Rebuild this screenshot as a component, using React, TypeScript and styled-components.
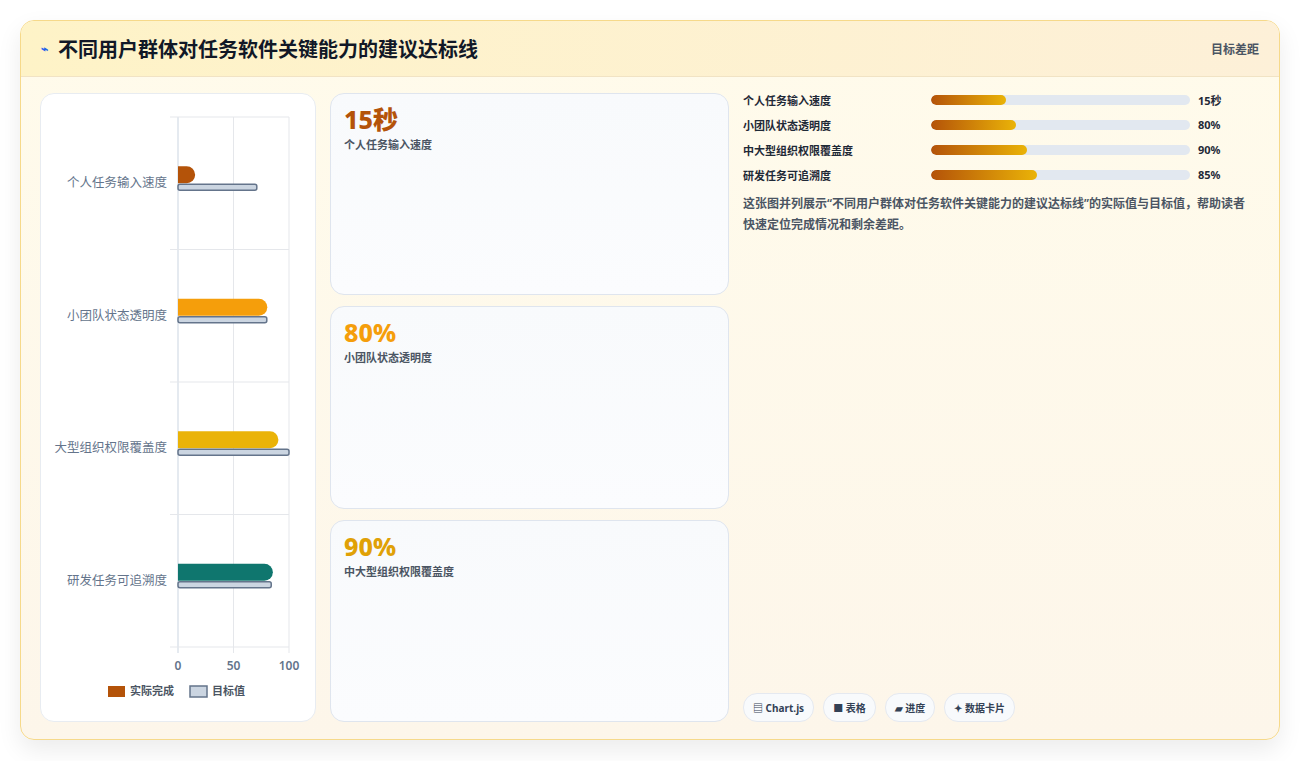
import React from "react";
import styled, { createGlobalStyle } from "styled-components";

const Global = createGlobalStyle`
  body {
    margin: 0;
    background: #f3f4f6;
    font-family: "Noto Sans", "Noto Sans CJK SC", sans-serif;
  }
`;

const Page = styled.div`
  width: 1300px;
  height: 761px;
  padding: 20px;
  box-sizing: border-box;
  background: #ffffff;
`;

const Card = styled.div`
  height: 720px;
  width: 1260px;
  box-sizing: border-box;
  border: 1px solid #f6d98a;
  border-radius: 14px;
  background: linear-gradient(180deg, #fffbeb 0%, #fdf6ea 100%);
  box-shadow: 0 10px 24px rgba(0, 0, 0, 0.08);
  display: flex;
  flex-direction: column;
  overflow: hidden;
`;

const Header = styled.div`
  height: 55px;
  flex-shrink: 0;
  display: flex;
  align-items: center;
  justify-content: space-between;
  padding: 0 20px;
  background: linear-gradient(90deg, #fef3c7 0%, #fdf0d8 100%);
  border-bottom: 1px solid #f1e3c4;
`;

const Title = styled.h1`
  margin: 0;
  font-size: 20px;
  font-weight: 700;
  color: #111827;
  display: flex;
  align-items: center;
  gap: 10px;
`;

const Gap = styled.span`
  font-size: 12px;
  font-weight: 600;
  color: #4b5563;
`;

const Body = styled.div`
  flex: 1;
  display: grid;
  grid-template-columns: 276px 399px 1fr;
  gap: 14px;
  padding: 16px 19px 18px 19px;
`;

const Panel = styled.div`
  background: #ffffff;
  border: 1px solid #e8ecf1;
  border-radius: 14px;
  display: flex;
  flex-direction: column;
  align-items: center;
`;

const Cards = styled.div`
  display: flex;
  flex-direction: column;
  gap: 11px;
`;

const Kpi = styled.div`
  flex: 1;
  border: 1px solid #dfe5ee;
  border-radius: 14px;
  background: linear-gradient(180deg, #f8fafc 0%, #fbfcfe 100%);
  padding: 10px 13px;
`;

const KpiValue = styled.div<{ $c: string }>`
  font-size: 25px;
  font-weight: 800;
  color: ${(p) => p.$c};
  line-height: 1.2;
`;

const KpiLabel = styled.div`
  font-size: 11px;
  font-weight: 600;
  color: #4b5563;
  margin-top: 2px;
`;

const Side = styled.div`
  display: flex;
  flex-direction: column;
  margin-top: -6px;
`;

const Row = styled.div`
  display: grid;
  grid-template-columns: 188px 267px 1fr;
  align-items: center;
  height: 25px;
  font-size: 11px;
  font-weight: 700;
  color: #1f2937;
`;

const Track = styled.div`
  height: 10px;
  border-radius: 5px;
  background: #e2e8f0;
  margin-right: 8px;
  overflow: hidden;
`;

const Fill = styled.div`
  height: 100%;
  border-radius: 5px;
  background: linear-gradient(90deg, #b45309, #eab308);
`;

const Note = styled.p`
  margin: 6px 0 0;
  font-size: 12px;
  font-weight: 600;
  line-height: 1.75;
  color: #4b5563;
  padding-right: 14px;
`;

const Chips = styled.div`
  margin-top: auto;
  display: flex;
  gap: 9px;
`;

const Chip = styled.span`
  padding: 6px 9px;
  border: 1px solid #e5e9f0;
  border-radius: 14px;
  background: #f8fafc;
  font-size: 10px;
  font-weight: 700;
  color: #334155;
`;

const rows = [
  { label: "个人任务输入速度", short: "个人任务输入速度", v: "15秒", fill: 29, actual: 15, target: 71, color: "#b45309", kc: "#b45309" },
  { label: "小团队状态透明度", short: "小团队状态透明度", v: "80%", fill: 33, actual: 80, target: 80, color: "#f59e0b", kc: "#f59e0b" },
  { label: "中大型组织权限覆盖度", short: "大型组织权限覆盖度", v: "90%", fill: 37, actual: 90, target: 100, color: "#eab308", kc: "#e0a106" },
  { label: "研发任务可追溯度", short: "研发任务可追溯度", v: "85%", fill: 41, actual: 85, target: 84, color: "#0f766e", kc: "" },
];

const Chart = () => {
  const x0 = 138, w = 111, y0 = 23, band = 132.5;
  const sx = (v: number) => x0 + (v / 100) * w;
  return (
    <svg width="276" height="627" style={{ fontFamily: '"Noto Sans","Noto Sans CJK SC",sans-serif' }}>
      {[0, 50, 100].map((t) => (
        <g key={t}>
          <line x1={sx(t)} x2={sx(t)} y1={y0} y2={y0 + 4 * band + 6} stroke={t === 0 ? "#cbd5e1" : "#e5e7eb"} />
          <text x={sx(t)} y={y0 + 4 * band + 23} textAnchor="middle" fontSize="12" fill="#64748b" fontWeight="600">{t}</text>
        </g>
      ))}
      {[0, 1, 2, 3, 4].map((i) => (
        <line key={i} x1={x0 - 8} x2={x0 + w} y1={y0 + i * band} y2={y0 + i * band} stroke="#e5e7eb" />
      ))}
      {rows.map((r, i) => {
        const cy = y0 + i * band + band / 2;
        return (
          <g key={r.label}>
            <text x={x0 - 11} y={cy + 4} textAnchor="end" fontSize="12.5" fill="#64748b">{r.short}</text>
            <path d={`M${x0} ${cy - 17} H${sx(r.actual) - 8} a8 8 0 0 1 0 17 H${x0} Z`} fill={r.color} />
            <rect x={x0} y={cy + 1} width={sx(r.target) - x0} height={6} rx={2} fill="#cbd5e1" stroke="#64748b" strokeWidth="1.5" />
          </g>
        );
      })}
      <rect x="68" y="592" width="17" height="11" fill="#b45309" />
      <text x="90" y="601" fontSize="11" fill="#4b5563" fontWeight="600">实际完成</text>
      <rect x="150" y="592" width="17" height="11" fill="#cbd5e1" stroke="#64748b" strokeWidth="1.5" />
      <text x="172" y="601" fontSize="11" fill="#4b5563" fontWeight="600">目标值</text>
    </svg>
  );
};

export default function App() {
  return (
    <Page>
      <Global />
      <Card>
        <Header>
          <Title>
            <span style={{ color: "#2563eb", fontSize: 12 }}>⌁</span>
            不同用户群体对任务软件关键能力的建议达标线
          </Title>
          <Gap>目标差距</Gap>
        </Header>
        <Body>
          <Panel>
            <Chart />
          </Panel>
          <Cards>
            {rows.slice(0, 3).map((r) => (
              <Kpi key={r.label}>
                <KpiValue $c={r.kc}>{r.v}</KpiValue>
                <KpiLabel>{r.label}</KpiLabel>
              </Kpi>
            ))}
          </Cards>
          <Side>
            {rows.map((r) => (
              <Row key={r.label}>
                <span>{r.label}</span>
                <Track>
                  <Fill style={{ width: `${r.fill}%` }} />
                </Track>
                <span>{r.v}</span>
              </Row>
            ))}
            <Note>这张图并列展示“不同用户群体对任务软件关键能力的建议达标线”的实际值与目标值，帮助读者快速定位完成情况和剩余差距。</Note>
            <Chips>
              <Chip>▤ Chart.js</Chip>
              <Chip>■ 表格</Chip>
              <Chip>▰ 进度</Chip>
              <Chip>✦ 数据卡片</Chip>
            </Chips>
          </Side>
        </Body>
      </Card>
    </Page>
  );
}
